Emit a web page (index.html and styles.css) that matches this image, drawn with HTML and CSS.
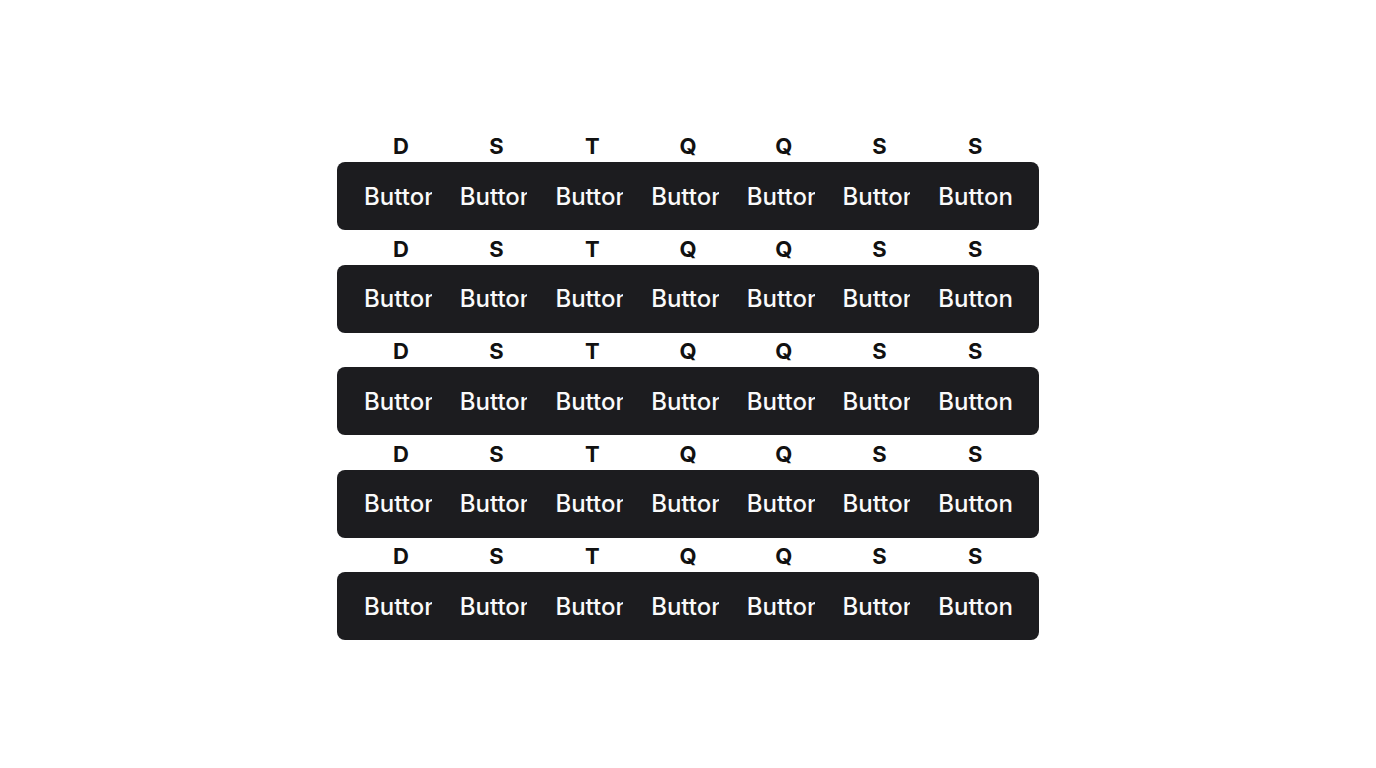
FILE: index.html
```html
<!DOCTYPE html>
<html lang="pt">
<head>
    <meta charset="UTF-8">
    <meta name="viewport" content="width=device-width, initial-scale=1.0">
    <title>Semanas</title>
    <link rel="stylesheet" href="styles.css">
</head>
<body>
    <div class="calendar" id="calendar"></div>

    <script>
        const DAYS = ['D', 'S', 'T', 'Q', 'Q', 'S', 'S'];
        const WEEKS = 5;

        // Build the week rows
        function buildCalendar() {
            const calendar = document.getElementById('calendar');

            for (let w = 0; w < WEEKS; w++) {
                const week = document.createElement('div');
                week.className = 'week';

                const header = document.createElement('div');
                header.className = 'days';
                DAYS.forEach(day => {
                    const cell = document.createElement('span');
                    cell.className = 'day';
                    cell.textContent = day;
                    header.appendChild(cell);
                });

                const bar = document.createElement('div');
                bar.className = 'bar';
                DAYS.forEach(() => {
                    const btn = document.createElement('button');
                    btn.type = 'button';
                    btn.className = 'cell-btn';
                    const label = document.createElement('span');
                    label.textContent = 'Button';
                    btn.appendChild(label);
                    bar.appendChild(btn);
                });

                week.appendChild(header);
                week.appendChild(bar);
                calendar.appendChild(week);
            }
        }

        document.addEventListener('DOMContentLoaded', buildCalendar);
    </script>
</body>
</html>
```

FILE: styles.css
```css
body {
    margin: 0;
    font-family: Inter, "Noto Sans", Arial, sans-serif;
    background-color: #ffffff;
    height: 768px;
    display: flex;
    align-items: center;
    justify-content: center;
}
.calendar {
    display: flex;
    flex-direction: column;
    width: 702px;
}
.days {
    display: grid;
    grid-template-columns: repeat(7, minmax(0, 1fr));
    padding: 0 16px;
    height: 34.5px;
    align-items: center;
}
.day {
    text-align: center;
    font-size: 22px;
    font-weight: 700;
    color: #111111;
    line-height: 1;
    padding-top: 2px;
}
.bar {
    display: grid;
    grid-template-columns: repeat(7, minmax(0, 1fr));
    padding: 0 16px;
    height: 68px;
    background-color: #1c1c1f;
    border-radius: 8px;
}
.cell-btn {
    background: none;
    border: none;
    padding: 0 17px 0 11px;
    margin: 0;
    color: #fafafa;
    font-family: inherit;
    font-size: 24px;
    font-weight: 500;
    text-align: left;
    cursor: pointer;
    overflow: hidden;
    white-space: nowrap;
}
.cell-btn span {
    display: block;
    overflow: hidden;
}
.cell-btn:last-child,
.cell-btn:last-child span {
    overflow: visible;
}
```
